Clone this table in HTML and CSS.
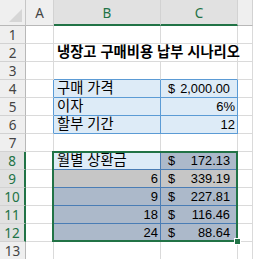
FILE: index.html
```html
<!DOCTYPE html>
<html lang="ko">
<head>
<meta charset="utf-8">
<title>냉장고 구매비용 납부 시나리오</title>
<link rel="stylesheet" href="styles.css">
</head>
<body>
<div class="sheet">
  <div class="corner"><span class="tri"></span></div>
  <div class="ch">A</div>
  <div class="ch sel">B</div>
  <div class="ch sel">C</div>
  <div class="ch"></div>

  <div class="rh">1</div><div class="c"></div><div class="c"></div><div class="c"></div><div class="c"></div>

  <div class="rh">2</div><div class="c"></div><div class="c title">냉장고 구매비용 납부 시나리오</div><div class="c"></div>

  <div class="rh">3</div><div class="c"></div><div class="c bb"></div><div class="c bb"></div><div class="c"></div>

  <div class="rh">4</div><div class="c br"></div><div class="c info label">구매 가격</div><div class="c info acct"><span>$</span><span>2,000.00</span></div><div class="c"></div>

  <div class="rh">5</div><div class="c br"></div><div class="c info label">이자</div><div class="c info num">6%</div><div class="c"></div>

  <div class="rh">6</div><div class="c br"></div><div class="c info label">할부 기간</div><div class="c info num">12</div><div class="c"></div>

  <div class="rh">7</div><div class="c"></div><div class="c"></div><div class="c"></div><div class="c"></div>

  <div class="rh sel">8</div><div class="c"></div><div class="c res active label">월별 상환금</div><div class="c res tint acct"><span>$</span><span>172.13</span></div><div class="c"></div>

  <div class="rh sel">9</div><div class="c"></div><div class="c res grey num">6</div><div class="c res grey acct"><span>$</span><span>339.19</span></div><div class="c"></div>

  <div class="rh sel">10</div><div class="c"></div><div class="c res tint num">9</div><div class="c res tint acct"><span>$</span><span>227.81</span></div><div class="c"></div>

  <div class="rh sel">11</div><div class="c"></div><div class="c res tint num">18</div><div class="c res tint acct"><span>$</span><span>116.46</span></div><div class="c"></div>

  <div class="rh sel">12</div><div class="c"></div><div class="c res tint num">24</div><div class="c res tint acct"><span>$</span><span>88.64</span></div><div class="c"></div>

  <div class="rh">13</div><div class="c"></div><div class="c"></div><div class="c"></div><div class="c"></div>

  <div class="selection"></div>
  <div class="handle"></div>
</div>
</body>
</html>
```

FILE: styles.css
```css
* {
  box-sizing: border-box;
}

body {
  margin: 0;
  background: #ffffff;
}

.sheet {
  position: relative;
  display: grid;
  grid-template-columns: 26px 28px 107px 77px 15px;
  grid-template-rows: 26px;
  grid-auto-rows: 18px;
  width: 253px;
  height: 259px;
  overflow: hidden;
  font-family: "Liberation Sans", "Noto Sans CJK KR", sans-serif;
  font-size: 13px;
  color: #000000;
}

.corner {
  background: #efefef;
  border-right: 1px solid #c6c6c6;
  border-bottom: 1px solid #b8b8b8;
  display: flex;
  align-items: flex-end;
  justify-content: flex-end;
  padding: 0 3px 3px 0;
}

.tri {
  width: 0;
  height: 0;
  border-left: 13px solid transparent;
  border-bottom: 13px solid #d6d6d6;
}

.ch {
  background: #efefef;
  border-right: 1px solid #d2d2d2;
  border-bottom: 1px solid #b8b8b8;
  font-family: "Noto Sans", sans-serif;
  font-size: 13.5px;
  color: #444444;
  display: flex;
  align-items: center;
  justify-content: center;
  padding-top: 1px;
}

.ch.sel {
  background: #e1e1e1;
  color: #217346;
  border-bottom: 2px solid #217346;
}

.rh {
  background: #efefef;
  border-right: 1px solid #b8b8b8;
  border-bottom: 1px solid #d2d2d2;
  font-family: "Noto Sans", sans-serif;
  font-size: 13.5px;
  color: #444444;
  display: flex;
  align-items: center;
  justify-content: center;
}

.rh.sel {
  background: #e1e1e1;
  color: #217346;
  border-right: 2px solid #217346;
}

.c {
  border-right: 1px solid #dadada;
  border-bottom: 1px solid #dadada;
  white-space: nowrap;
  line-height: 17px;
  padding: 0 3px;
}

.title {
  grid-column: span 2;
  font-weight: bold;
  font-size: 14.3px;
  border-right: 1px solid #dadada;
}

.label {
  font-size: 14.3px;
}

.bb {
  border-bottom-color: #5b9bd5;
}

.br {
  border-right-color: #5b9bd5;
}

.info {
  background: #ddebf7;
  border-right-color: #5b9bd5;
  border-bottom-color: #5b9bd5;
}

.res {
  border-right-color: #4a7db5;
  border-bottom-color: #4a7db5;
}

.active {
  background: #ddebf7;
}

.tint {
  background: #acb9ca;
}

.grey {
  background: #c6c6c6;
}

.num {
  text-align: right;
  padding-right: 2px;
  font-size: 13px;
}

.acct {
  display: flex;
  justify-content: space-between;
  padding: 0 7px 0 7px;
  font-size: 12.8px;
}

.selection {
  position: absolute;
  left: 52px;
  top: 151px;
  width: 186px;
  height: 91px;
  border: 2px solid #217346;
}

.handle {
  position: absolute;
  left: 234px;
  top: 238px;
  width: 7px;
  height: 7px;
  background: #217346;
  border: 1px solid #ffffff;
}
```
